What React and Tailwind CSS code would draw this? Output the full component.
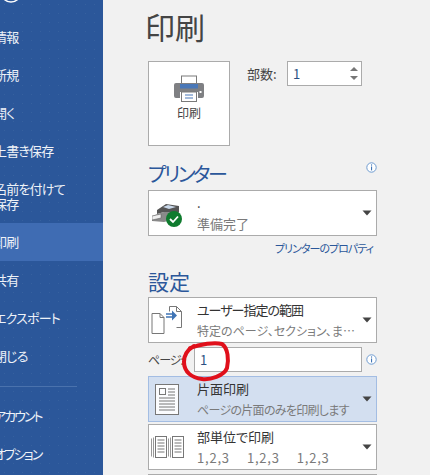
const font = { fontFamily: '"Noto Sans CJK JP", "Liberation Sans", sans-serif' };

function Caret() {
  return <svg width="10" height="6" viewBox="0 0 10 6" className="shrink-0"><path d="M0.5 0.5h9L5 5.5z" fill="#444" /></svg>;
}
function Info({ className = "" }) {
  return (
    <svg width="11" height="11" viewBox="0 0 11 11" className={className}>
      <circle cx="5.5" cy="5.5" r="4.7" fill="#fff" stroke="#6d9bd0" strokeWidth="1" />
      <rect x="5" y="2.4" width="1.1" height="1.2" fill="#3f74b5" />
      <rect x="5" y="4.5" width="1.1" height="3.9" fill="#3f74b5" />
    </svg>
  );
}
function NavItem({ children, active, tall, narrow }) {
  return (
    <div className={`flex items-center text-[13px] leading-[15px] text-[#eef2f8] ${tall ? "h-[53px]" : "h-[38px]"} ${active ? "bg-[#3f6cb3]" : ""}`}>
      <div className={`-ml-[6px] pb-[2px] whitespace-pre ${narrow ? "tracking-[-2px]" : "tracking-[-0.8px]"}`}>{children}</div>
    </div>
  );
}
function PrinterIcon() {
  return (
    <svg width="30" height="27" viewBox="0 0 30 27">
      <rect x="7.5" y="1" width="15" height="9" fill="#fff" stroke="#7a7a7a" />
      <path d="M2 8h26a2 2 0 0 1 2 2v11a2 2 0 0 1-2 2h-4v-6H6v6H2a2 2 0 0 1-2-2V10a2 2 0 0 1 2-2z" fill="#7f8083" />
      <rect x="6" y="9" width="18" height="4.5" fill="#4a78b8" />
      <rect x="7.5" y="17" width="15" height="9.5" fill="#fff" stroke="#7a7a7a" />
      <path d="M11 20h8M11 23h8" stroke="#4a78b8" />
      <rect x="25.5" y="16" width="2" height="2" fill="#fff" />
    </svg>
  );
}
function PrinterStatusIcon() {
  return (
    <svg width="32" height="24" viewBox="0 0 32 24">
      <path d="M0 13 L12 9 L27 9 L27 15 L12 19 L0 18z" fill="#8a8a8a" />
      <path d="M5 7 L14 1 L27 3 L27 9 L12 9 L5 11z" fill="#555" />
      <path d="M11 4 L16 2 L24 4 L17 6z" fill="#c9d8ea" />
      <path d="M0 13 L9 11 L9 15 L0 17z" fill="#efefef" stroke="#555" strokeWidth="0.5" />
      <circle cx="22" cy="16" r="8" fill="#0f7b2e" />
      <path d="M18 16l3 3 5-5.5" fill="none" stroke="#fff" strokeWidth="1.8" />
    </svg>
  );
}
function RangeIcon() {
  return (
    <svg width="33" height="30" viewBox="0 0 33 30" fill="none">
      <path d="M1 8.5h8l4 4v16H1z" fill="#fff" stroke="#777" />
      <path d="M9 8.5v4h4" stroke="#777" />
      <path d="M18.5 1.5h7l5 5v16h-5M18.5 1.5v5" stroke="#777" fill="#fff" />
      <path d="M25.5 1.5v5h5" stroke="#777" />
      <path d="M15 9h7M15 12h7" stroke="#3f74b5" strokeWidth="1.5" />
      <path d="M21 5.5l5 5-5 5z" fill="#3f74b5" />
    </svg>
  );
}
function SidedIcon() {
  return (
    <svg width="24" height="31" viewBox="0 0 24 31" fill="none" stroke="#777">
      <rect x="0.5" y="0.5" width="23" height="30" fill="#fbfcfe" />
      <rect x="4.5" y="4.5" width="6" height="6" />
      <path d="M13 5h7M13 8h7M13 11h7M4 14h16M4 17h16M4 20h16M4 23h16M4 26h16" />
    </svg>
  );
}
function CollateIcon() {
  const Stack = ({ x }) => (
    <g transform={`translate(${x} 0)`}>
      <path d="M0.5 2.5v18M2.5 1.5v20" stroke="#999" />
      <rect x="4.5" y="0.5" width="11" height="21" fill="#fff" stroke="#777" />
      <path d="M6.5 4h7M6.5 7h7M6.5 10h7M6.5 13h7M6.5 16h7" stroke="#777" />
    </g>
  );
  return (
    <svg width="33" height="23" viewBox="0 0 33 23" fill="none">
      <Stack x={0} />
      <Stack x={17} />
    </svg>
  );
}
function Dropdown({ icon, title, children, selected, mt = "", iconBox = "pl-[2px]", titleClass = "", subClass = "" }) {
  return (
    <div className={`h-[46px] ${mt} w-[229px] flex items-center border pr-[4px] ${selected ? "bg-[#d3dff0] border-[#a3bde3]" : "bg-white border-[#ababab]"}`}>
      <div className={`w-[48px] shrink-0 flex ${iconBox}`}>{icon}</div>
      <div className="flex-1 min-w-0 overflow-hidden text-[13px] leading-[21px]">
        <div className={`text-[#333] whitespace-nowrap ${titleClass}`}>{title}</div>
        <div className={`text-[#7a7a7a] whitespace-nowrap ${subClass}`}>{children}</div>
      </div>
      <Caret />
    </div>
  );
}

export default function App() {
  return (
    <div style={font} className="relative w-[430px] h-[475px] overflow-hidden bg-[#f1f1f1] flex [font-feature-settings:'palt']">
      <aside className="w-[103px] h-[475px] shrink-0 bg-[#2b579a] bg-[radial-gradient(#36619f_0.7px,transparent_0.8px)] bg-[length:9px_9px]">
        <svg width="22" height="3" viewBox="0 0 22 3" className="block"><circle cx="11" cy="-8" r="10" fill="none" stroke="#fff" strokeWidth="1.5" /></svg>
        <div className="h-[15px]" />
        <NavItem>情報</NavItem>
        <NavItem>新規</NavItem>
        <NavItem>開く</NavItem>
        <NavItem>上書き保存</NavItem>
        <NavItem tall>{"名前を付けて\n保存"}</NavItem>
        <NavItem active>印刷</NavItem>
        <NavItem>共有</NavItem>
        <NavItem>エクスポート</NavItem>
        <NavItem>閉じる</NavItem>
        <div className="h-[22px] flex items-center"><div className="w-[77px] h-px bg-[#4a72ad]" /></div>
        <NavItem narrow>アカウント</NavItem>
        <NavItem narrow>オプション</NavItem>
      </aside>

      <main className="pl-[45px] w-[327px] shrink-0">
        <h1 className="mt-[6px] -ml-[3px] h-[40px] text-[30px] leading-[40px] text-[#444] font-normal">印刷</h1>
        <div className="mt-[15px] flex">
          <div className="w-[82px] h-[85px] bg-white border border-[#ababab] flex flex-col items-center pt-[13px]">
            <PrinterIcon />
            <div className="mt-[3px] text-[12px] leading-[16px] text-[#444]">印刷</div>
          </div>
          <div className="ml-[17px] mt-[5px] text-[13px] leading-[16px] text-[#444] w-[40px]">部数:</div>
          <div className="h-[25px] w-[75px] bg-white border border-[#ababab] flex items-center justify-between pl-[5px] pr-[3px]">
            <span className="text-[13px] text-[#2b4f82]">1</span>
            <div className="flex flex-col gap-[5px]">
              <svg width="8" height="4" viewBox="0 0 8 4"><path d="M4 0l4 4H0z" fill="#777" /></svg>
              <svg width="8" height="4" viewBox="0 0 8 4"><path d="M0 0h8L4 4z" fill="#777" /></svg>
            </div>
          </div>
        </div>

        <div className="mt-[14px] w-[229px] h-[28px] flex items-start justify-between">
          <h2 className="text-[20px] leading-[28px] tracking-[-2.5px] text-[#2b579a] font-normal">プリンター</h2>
          <Info className="mt-[2px]" />
        </div>
        <div className="mt-[2px] w-[229px] h-[46px] bg-white border border-[#ababab] flex items-center pr-[4px]">
          <div className="w-[48px] pl-[3px] pt-[4px] shrink-0"><PrinterStatusIcon /></div>
          <div className="flex-1 text-[13px] leading-[21px]">
            <div className="text-[#333]">.</div>
            <div className="text-[#7a7a7a]">準備完了</div>
          </div>
          <Caret />
        </div>
        <div className="w-[225px] mt-[3px] h-[18px] text-right text-[11px] tracking-[-1px] leading-[18px] text-[#2b579a] whitespace-nowrap">プリンターのプロパティ</div>
        <h2 className="mt-[10px] h-[29px] text-[21px] leading-[29px] text-[#2b579a] font-normal">設定</h2>

        <Dropdown mt="mt-[1px]" icon={<RangeIcon />} title="ユーザー指定の範囲" titleClass="tracking-[-1px]" subClass="text-[12px]">特定のページ、セクション、ま…</Dropdown>
        <div className="mt-[4px] h-[25px] flex items-center">
          <span className="w-[46px] text-[12px] tracking-[-1px] text-[#444] whitespace-nowrap">ページ:</span>
          <div className="w-[168px] h-[25px] bg-white border border-[#ababab] flex items-center pl-[5px] text-[13px] text-[#2b4f82]">1</div>
          <Info className="ml-[4px]" />
        </div>
        <Dropdown mt="mt-[4px]" selected iconBox="pl-[6px]" icon={<SidedIcon />} title="片面印刷" subClass="text-[12px] tracking-[-0.7px]">ページの片面のみを印刷します</Dropdown>
        <Dropdown mt="mt-[2px]" icon={<CollateIcon />} title="部単位で印刷">
          <span className="flex gap-[17px] tracking-[0.8px]"><span>1,2,3</span><span>1,2,3</span><span>1,2,3</span></span>
        </Dropdown>
        <div className="mt-[4px] w-[229px] h-[20px] bg-white border border-[#ababab]" />
      </main>

      <svg className="absolute left-[180px] top-[340px]" width="52" height="46" viewBox="0 0 52 46" fill="none">
        <path d="M10 8C20 4 35 2 42 4C48 8 49 20 47 28C44 36 30 40 22 39C12 38 4 32 4 22C4 15 7 10 14 6" stroke="#e0101b" strokeWidth="4" strokeLinecap="round" />
      </svg>
    </div>
  );
}
